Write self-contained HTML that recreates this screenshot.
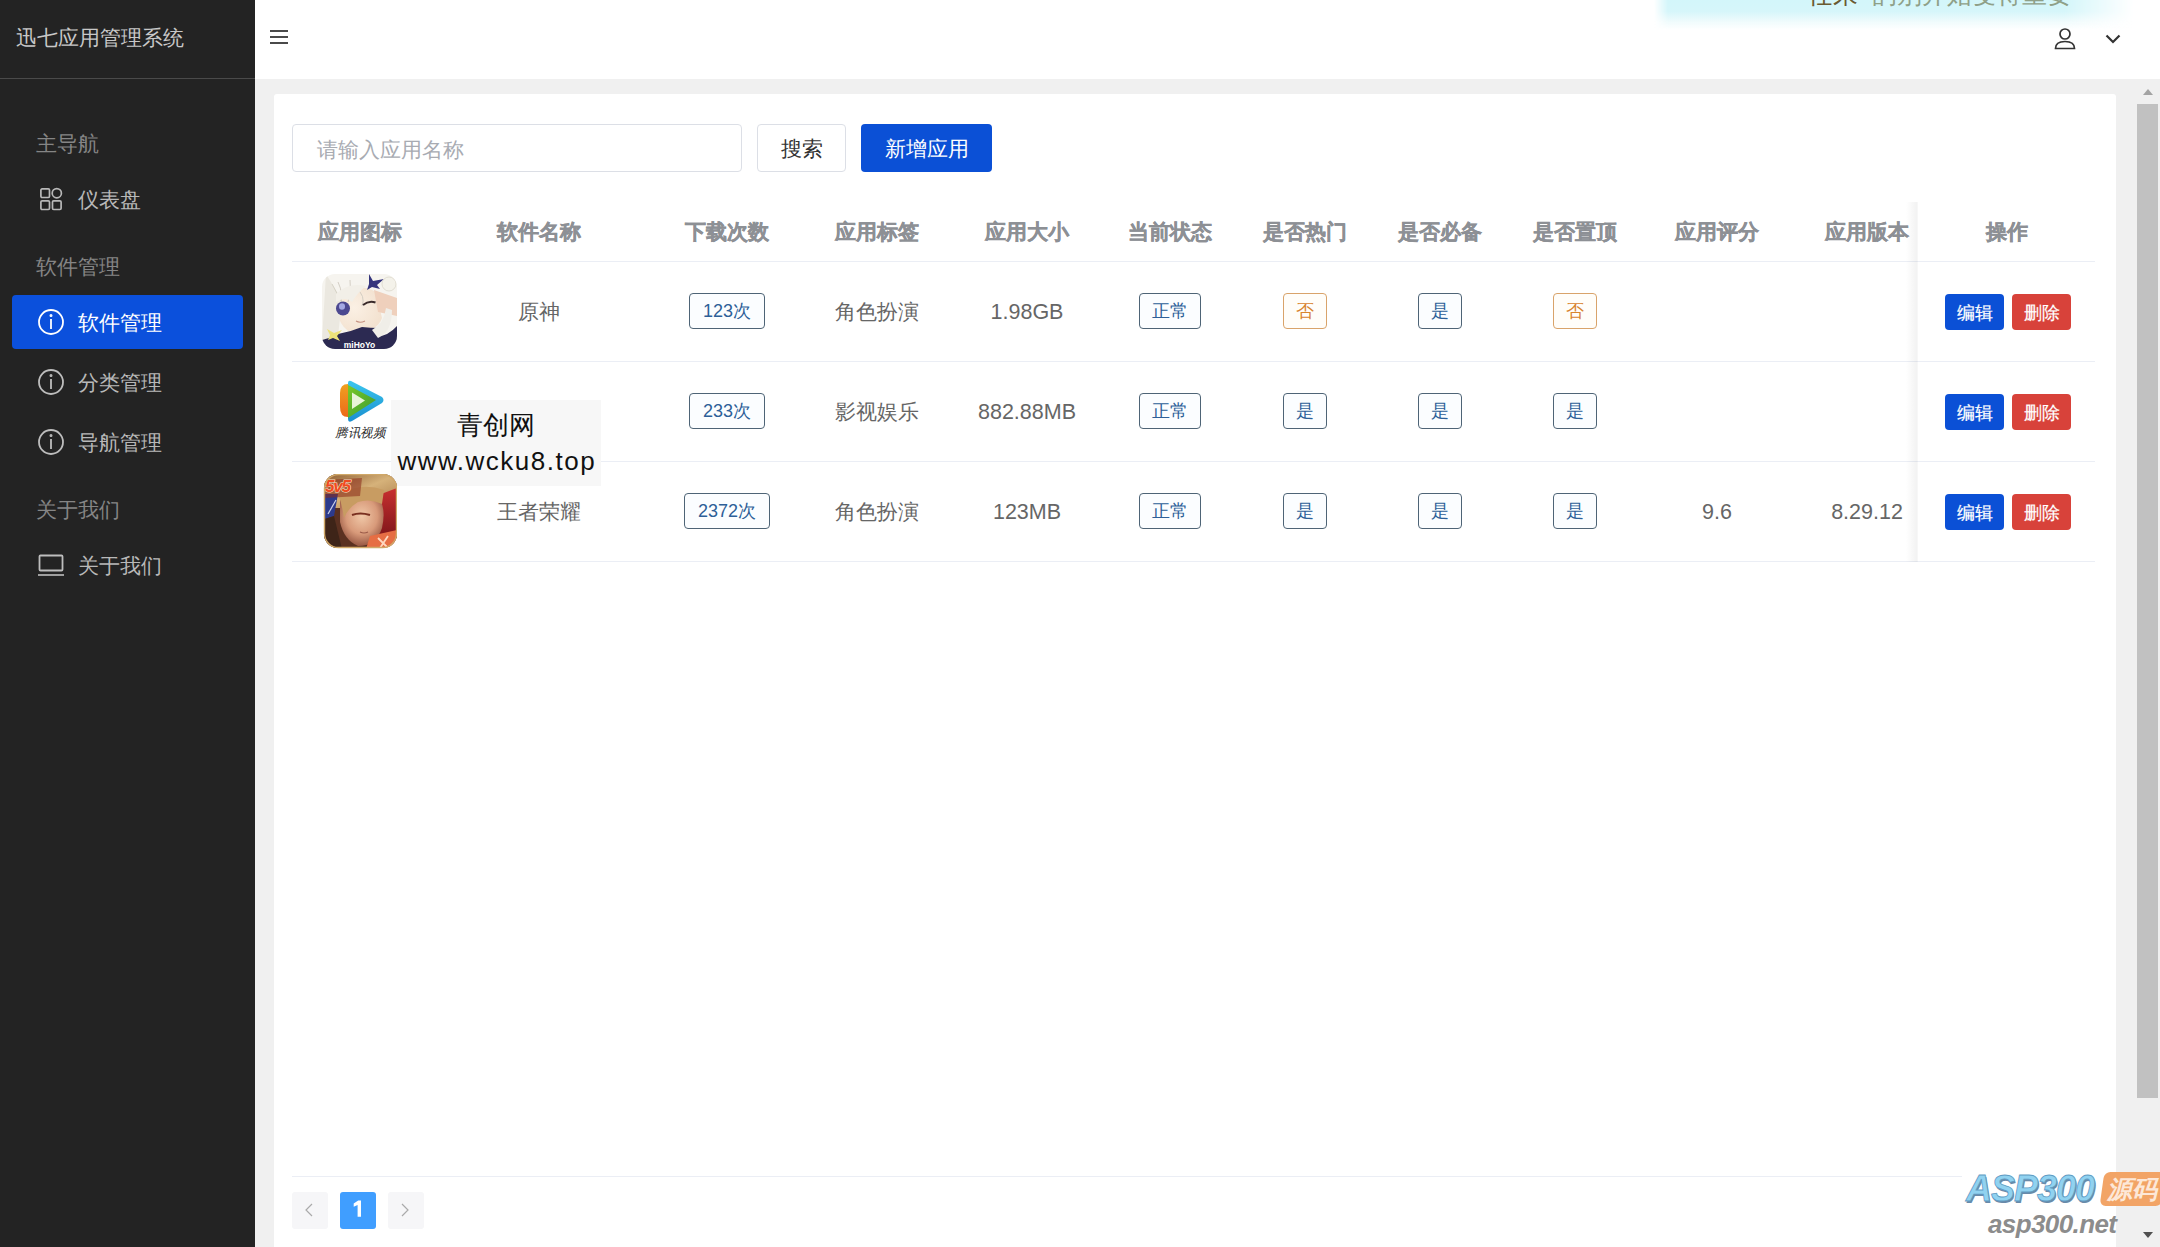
<!DOCTYPE html>
<html><head><meta charset="utf-8">
<style>
*{margin:0;padding:0;box-sizing:border-box}
html,body{width:2160px;height:1247px;overflow:hidden;background:#f0f0f0;font-family:"Liberation Sans",sans-serif}
.abs{position:absolute}
#side{position:absolute;left:0;top:0;width:255px;height:1247px;background:#232323}
#side .title{position:absolute;left:16px;top:25px;font-size:21px;line-height:26px;color:#c8c8c8;white-space:nowrap}
#side .hline{position:absolute;left:0;top:78px;width:255px;height:1px;background:#4a4a4a}
.grp{position:absolute;left:36px;font-size:21px;line-height:26px;color:#858585;white-space:nowrap}
.item{position:absolute;left:12px;width:231px;height:54px;border-radius:4px;color:#b8b8b8;font-size:21px;white-space:nowrap}
.item .txt{position:absolute;left:66px;top:15px;line-height:26px}
.item svg{position:absolute;left:26px;top:14px}
.item.active{background:#0b50dc;color:#fff}
#header{position:absolute;left:255px;top:0;width:1905px;height:79px;background:#fff}
#card{position:absolute;left:274px;top:94px;width:1842px;height:1200px;background:#fff;border-radius:3px}


.hb{position:absolute;left:270px;width:18px;height:2px;background:#4a4a4a}
.ph{position:absolute;left:292px;top:124px;width:450px;height:48px;border:1px solid #dcdfe6;border-radius:4px;background:#fff}
.ph span{position:absolute;left:24px;top:11.5px;font-size:21px;line-height:26px;color:#a8abb2;white-space:nowrap}
.btn{position:absolute;top:124px;height:48px;border-radius:4px;font-size:21px;line-height:48px;text-align:center;white-space:nowrap}
.th{position:absolute;top:219px;width:200px;margin-left:-100px;text-align:center;font-size:21px;line-height:26px;font-weight:bold;color:#8d9095;-webkit-text-stroke:0.35px #8d9095;white-space:nowrap}
.td{position:absolute;width:240px;margin-left:-120px;text-align:center;font-size:21px;line-height:26px;color:#666;white-space:nowrap}
.num{font-size:21.5px}
.tgw{position:absolute;width:200px;margin-left:-100px;text-align:center;height:36px}
.tag{display:inline-block;height:36px;line-height:34px;border:1.2px solid #4e6476;border-radius:4px;background:#fbfdff;color:#2d5f98;font-size:18px;padding:0 13px;white-space:nowrap}
.tag.o{border-color:#d9a36a;color:#d8842f;background:#fffdf9;padding:0 12px}
.tag.s{padding:0 12px}
.rline{position:absolute;left:292px;width:1803px;height:1px;background:#ebeef5}
.ab{position:absolute;width:59px;height:36px;border-radius:4px;color:#fff;font-size:18px;line-height:38px;text-align:center;-webkit-text-stroke:0.2px #fff}
.ab.e{background:#0b50d6}
.ab.d{background:#d8423a}
.pg{position:absolute;top:1192px;width:36px;height:37px;border-radius:3px;background:#f6f6f8;text-align:center;line-height:37px}
</style></head><body>
<div id="side">
  <div class="title">迅七应用管理系统</div>
  <div class="hline"></div>
  <div class="grp" style="top:131px">主导航</div>
  <div class="item" style="top:172px">
    <svg width="26" height="26" viewBox="0 0 26 26" fill="none" stroke="#b8b8b8" stroke-width="1.7" style="left:27px;top:15px"><rect x="1.9" y="1.9" width="8.6" height="8.6" rx="1.2"/><circle cx="17.8" cy="6.2" r="4.6"/><rect x="1.9" y="13.9" width="8.6" height="8.6" rx="1.2"/><rect x="13.5" y="13.9" width="8.6" height="8.6" rx="1.2"/></svg>
    <span class="txt">仪表盘</span></div>
  <div class="grp" style="top:254px">软件管理</div>
  <div class="item active" style="top:295px">
    <svg width="26" height="26" viewBox="0 0 26 26" fill="none" stroke="#fff" stroke-width="1.8"><circle cx="13" cy="13" r="12"/><line x1="13" y1="10" x2="13" y2="20"/><circle cx="13" cy="6.5" r="0.6" fill="#fff"/></svg>
    <span class="txt">软件管理</span></div>
  <div class="item" style="top:355px">
    <svg width="26" height="26" viewBox="0 0 26 26" fill="none" stroke="#bdbdbd" stroke-width="1.8"><circle cx="13" cy="13" r="12"/><line x1="13" y1="10" x2="13" y2="20"/><circle cx="13" cy="6.5" r="0.6" fill="#bdbdbd"/></svg>
    <span class="txt">分类管理</span></div>
  <div class="item" style="top:415px">
    <svg width="26" height="26" viewBox="0 0 26 26" fill="none" stroke="#bdbdbd" stroke-width="1.8"><circle cx="13" cy="13" r="12"/><line x1="13" y1="10" x2="13" y2="20"/><circle cx="13" cy="6.5" r="0.6" fill="#bdbdbd"/></svg>
    <span class="txt">导航管理</span></div>
  <div class="grp" style="top:497px">关于我们</div>
  <div class="item" style="top:538px">
    <svg width="26" height="26" viewBox="0 0 26 26" fill="none" stroke="#bdbdbd" stroke-width="1.8"><rect x="1.5" y="3.5" width="23" height="15" rx="1"/><line x1="0" y1="23" x2="26" y2="23" stroke-width="1.6"/></svg>
    <span class="txt">关于我们</span></div>
</div>

<div id="header"></div>
<div class="hb" style="top:30px"></div><div class="hb" style="top:36px"></div><div class="hb" style="top:42px"></div>
<div id="card"></div>
<div class="ph"><span>请输入应用名称</span></div>
<div class="btn" style="left:757px;width:89px;border:1px solid #dcdfe6;background:#fff;color:#333">搜索</div>
<div class="btn" style="left:861px;width:131px;background:#0b50d6;color:#fff;line-height:50px">新增应用</div>
<div class="th" style="left:360px">应用图标</div>
<div class="th" style="left:539px">软件名称</div>
<div class="th" style="left:727px">下载次数</div>
<div class="th" style="left:877px">应用标签</div>
<div class="th" style="left:1027px">应用大小</div>
<div class="th" style="left:1170px">当前状态</div>
<div class="th" style="left:1305px">是否热门</div>
<div class="th" style="left:1440px">是否必备</div>
<div class="th" style="left:1575px">是否置顶</div>
<div class="th" style="left:1717px">应用评分</div>
<div class="th" style="left:1867px">应用版本</div>
<div class="th" style="left:2007px">操作</div>
<div class="rline" style="top:261px"></div>
<div class="rline" style="top:361px"></div>
<div class="rline" style="top:461px"></div>
<div class="rline" style="top:561px"></div>
<div class="td" style="left:539px;top:299px">原神</div>
<div class="tgw" style="left:727px;top:293px"><span class="tag">123次</span></div>
<div class="td" style="left:877px;top:299px">角色扮演</div>
<div class="td num" style="left:1027px;top:299px">1.98GB</div>
<div class="tgw" style="left:1170px;top:293px"><span class="tag s">正常</span></div>
<div class="tgw" style="left:1305px;top:293px"><span class="tag s o">否</span></div>
<div class="tgw" style="left:1440px;top:293px"><span class="tag s ">是</span></div>
<div class="tgw" style="left:1575px;top:293px"><span class="tag s o">否</span></div>
<div class="ab e" style="left:1945px;top:294px">编辑</div><div class="ab d" style="left:2012px;top:294px">删除</div>
<div class="td" style="left:539px;top:399px"></div>
<div class="tgw" style="left:727px;top:393px"><span class="tag">233次</span></div>
<div class="td" style="left:877px;top:399px">影视娱乐</div>
<div class="td num" style="left:1027px;top:399px">882.88MB</div>
<div class="tgw" style="left:1170px;top:393px"><span class="tag s">正常</span></div>
<div class="tgw" style="left:1305px;top:393px"><span class="tag s ">是</span></div>
<div class="tgw" style="left:1440px;top:393px"><span class="tag s ">是</span></div>
<div class="tgw" style="left:1575px;top:393px"><span class="tag s ">是</span></div>
<div class="ab e" style="left:1945px;top:394px">编辑</div><div class="ab d" style="left:2012px;top:394px">删除</div>
<div class="td" style="left:539px;top:499px">王者荣耀</div>
<div class="tgw" style="left:727px;top:493px"><span class="tag">2372次</span></div>
<div class="td" style="left:877px;top:499px">角色扮演</div>
<div class="td num" style="left:1027px;top:499px">123MB</div>
<div class="tgw" style="left:1170px;top:493px"><span class="tag s">正常</span></div>
<div class="tgw" style="left:1305px;top:493px"><span class="tag s ">是</span></div>
<div class="tgw" style="left:1440px;top:493px"><span class="tag s ">是</span></div>
<div class="tgw" style="left:1575px;top:493px"><span class="tag s ">是</span></div>
<div class="td num" style="left:1717px;top:499px">9.6</div>
<div class="td num" style="left:1867px;top:499px">8.29.12</div>
<div class="ab e" style="left:1945px;top:494px">编辑</div><div class="ab d" style="left:2012px;top:494px">删除</div>
<div class="rline" style="top:1176px"></div>
<div class="pg" style="left:292px"><svg style="position:absolute;left:12px;top:11px" width="10" height="14" viewBox="0 0 10 14"><path d="M8 1 L2 7 L8 13" fill="none" stroke="#aaa" stroke-width="1.2"/></svg></div><div class="pg" style="left:340px;background:#409eff"><svg style="position:absolute;left:12px;top:8px" width="12" height="18" viewBox="0 0 12 18"><path d="M1.7 3.6 L6.2 0.5 L9 0.5 L9 16.7 L5.6 16.7 L5.6 4.9 L1.7 6.8 Z" fill="#fff"/></svg></div><div class="pg" style="left:388px"><svg style="position:absolute;left:12px;top:11px" width="10" height="14" viewBox="0 0 10 14"><path d="M2 1 L8 7 L2 13" fill="none" stroke="#aaa" stroke-width="1.2"/></svg></div>


<!-- fixed col shadow -->
<div style="position:absolute;left:1906px;top:202px;width:11px;height:360px;background:linear-gradient(to right,rgba(0,0,0,0),rgba(0,0,0,0.05))"></div>
<div style="position:absolute;left:1917px;top:202px;width:1px;height:360px;background:rgba(0,0,0,0.03)"></div>
<!-- genshin icon -->
<svg style="position:absolute;left:322px;top:274px" width="75" height="75" viewBox="0 0 75 75">
 <defs><clipPath id="c1"><rect x="0" y="0" width="75" height="75" rx="13"/></clipPath>
 <radialGradient id="gface" cx="0.4" cy="0.45" r="0.6"><stop offset="0" stop-color="#fbf0e4"/><stop offset="1" stop-color="#f3e2d0"/></radialGradient></defs>
 <g clip-path="url(#c1)">
  <rect width="75" height="75" fill="#f6f4ef"/>
  <path d="M14 22 C22 12 40 10 54 18 L60 44 C56 56 42 60 28 58 C18 52 13 40 14 22 Z" fill="url(#gface)"/>
  <path d="M52 16 L75 24 L75 42 L56 38 Z" fill="#efd0bc"/>
  <path d="M4 0 L20 26 L16 62 L0 66 Z" fill="#ebe8e0"/>
  <path d="M10 10 L26 40" stroke="#d6d2c6" stroke-width="1"/><path d="M16 8 Q22 20 18 34 M28 6 Q30 18 26 28 M34 14 Q44 22 40 32" stroke="#cfcac0" stroke-width="0.9" fill="none"/><path d="M14 20 Q26 8 44 12 Q36 18 30 28 Q24 22 14 28 Z" fill="#f2efe8"/>
  <ellipse cx="21" cy="34.5" rx="7" ry="7" fill="#4c4890"/>
  <ellipse cx="20" cy="32.5" rx="3" ry="3.2" fill="#a4a8e4"/>
  <path d="M41 31 Q47 26 53.5 28.5" stroke="#3a2a2a" stroke-width="2" fill="none"/>
  <path d="M34 47 Q38 49.5 43 47" stroke="#c69080" stroke-width="1.1" fill="none"/>
  <path d="M47 0 L51 7 L62 5 L55 11 L58 15 L50 13 L45 16 L47 10 Z" fill="#34347c"/>
  <circle cx="67" cy="10" r="7" fill="#f4f2ea" stroke="#dcd8cc" stroke-width="0.8"/>
  <path d="M0 66 L0 75 L75 75 L75 52 Q66 62 56 62 L58 54 Q48 54 40 53 Q28 58 16 60 Q8 64 0 66 Z" fill="#2c2a52"/>
  <path d="M50 56 Q62 50 64 34 L70 36 Q70 58 56 64 Z" fill="#f0eee8"/>
  <path d="M5 55 L12 59 L20 56 L15 62 L18 67 L11 64 L6 66 L8 61 Z" fill="#ece27a"/>
  <text x="37.5" y="73.5" font-family="Liberation Sans" font-weight="bold" font-size="8.5" fill="#fff" text-anchor="middle">miHoYo</text>
 </g>
</svg>
<!-- tencent video -->
<svg style="position:absolute;left:322px;top:367px" width="75" height="75" viewBox="0 0 75 75">
 <defs>
  <linearGradient id="tvb" x1="0" y1="0" x2="0" y2="1"><stop offset="0" stop-color="#3cc6ee"/><stop offset="1" stop-color="#1a8fd0"/></linearGradient>
  <linearGradient id="tvg" x1="0" y1="0" x2="1" y2="1"><stop offset="0" stop-color="#7ac928"/><stop offset="1" stop-color="#3a9a30"/></linearGradient>
  <linearGradient id="tvo" x1="0" y1="0" x2="0" y2="1"><stop offset="0" stop-color="#f0a020"/><stop offset="1" stop-color="#ec6a1a"/></linearGradient>
 </defs>
 <path d="M26 16 Q26 13 29 14 L60 30 Q63 33 60 36 L30 54 Q26 56 26 52 Z" fill="url(#tvb)"/>
 <path d="M26 17 Q18 17 18 26 L18 40 Q18 50 26 50 Z" fill="url(#tvo)"/>
 <path d="M26 18 L54 33 L26 51 Z" fill="url(#tvg)"/>
 <path d="M30 25.5 L43 33.5 L30 42 Z" fill="#e8f4d8"/>
 <text x="38.5" y="69.5" font-family="Liberation Sans" font-size="12.5" font-style="italic" fill="#2a2a2a" text-anchor="middle" letter-spacing="-0.4">腾讯视频</text>
</svg>
<!-- watermark box -->
<div style="position:absolute;left:391px;top:400px;width:210px;height:86px;background:#f7f7f7"></div>
<div style="position:absolute;left:391px;top:409px;width:210px;text-align:center;font-size:26px;line-height:32px;color:#111;font-weight:500">青创网</div>
<div style="position:absolute;left:391px;top:445px;width:210px;text-align:center;font-size:26px;line-height:32px;color:#111;letter-spacing:1.5px;padding-left:1.5px">www.wcku8.top</div>
<!-- honor of kings -->
<svg style="position:absolute;left:322px;top:474px" width="75" height="75" viewBox="0 0 75 75">
 <defs>
  <clipPath id="c3"><rect x="2" y="0" width="73" height="74" rx="14"/></clipPath>
  <linearGradient id="hkh" x1="0" y1="0" x2="1" y2="1"><stop offset="0" stop-color="#8a5a30"/><stop offset="0.5" stop-color="#d6b27a"/><stop offset="1" stop-color="#a87a48"/></linearGradient>
  <radialGradient id="hkf" cx="0.5" cy="0.4" r="0.65"><stop offset="0" stop-color="#f0c8a8"/><stop offset="0.55" stop-color="#d89a7a"/><stop offset="1" stop-color="#8a4a38"/></radialGradient>
  <linearGradient id="hkr" x1="0" y1="0" x2="0" y2="1"><stop offset="0" stop-color="#c83030"/><stop offset="1" stop-color="#7a1418"/></linearGradient>
 </defs>
 <g clip-path="url(#c3)">
  <rect width="75" height="75" fill="#5a3020"/>
  <rect x="0" y="0" width="75" height="34" fill="url(#hkh)"/>
  <path d="M54 22 L75 14 L75 64 L58 66 Z" fill="url(#hkr)"/>
  <path d="M0 20 L16 20 L12 42 L0 46 Z" fill="#2c3a8c"/>
  <path d="M6 40 L14 26" stroke="#c8d0e8" stroke-width="1.2"/>
  <path d="M0 46 L12 42 L20 75 L0 75 Z" fill="#3e2418"/>
  <path d="M18 26 Q36 18 58 26 Q64 36 60 54 Q54 72 36 72 Q22 66 18 48 Z" fill="url(#hkf)"/>
  <path d="M16 20 Q20 30 22 44 Q26 34 36 28 Q48 24 60 30 L62 16 Q40 8 16 20 Z" fill="#c89c62"/>
  <path d="M30 41 Q38 38 48 41" stroke="#7a3020" stroke-width="2.2" fill="none"/>
  <path d="M38 58 Q42 60 46 58" stroke="#9a5a48" stroke-width="1.2" fill="none"/>
  <path d="M48 62 L75 56 L75 75 L44 75 Z" fill="#e66e44"/>
  <path d="M56 64 L66 74 M66 62 L58 74" stroke="#ffd8c0" stroke-width="1.8"/>
  <path d="M0 6 L40 4 L38 22 L0 24 Z" fill="#8a2a1a" opacity="0.55"/><text x="3" y="18" font-family="Liberation Sans" font-weight="bold" font-style="italic" font-size="17" fill="#f04a20" stroke="#ffe6c8" stroke-width="1.1" paint-order="stroke" letter-spacing="-1.2">5v5</text>
 </g>
 <rect x="2.5" y="0.5" width="72" height="73" rx="14" fill="none" stroke="#d0a868" stroke-width="1.4"/>
</svg>
<!-- header right -->
<div style="position:absolute;left:1654px;top:0;width:480px;height:30px;background:linear-gradient(to bottom,#d3f6fa 0,#d6f6fa 38%,#eefbfc 70%,rgba(255,255,255,0) 100%);-webkit-mask-image:linear-gradient(to right,transparent 0,#000 14px,#000 calc(100% - 70px),transparent 100%)"></div>

<div style="position:absolute;left:1808px;top:-21px;font-size:25px;line-height:30px;color:#6a5a30;white-space:nowrap">任来</div>
<div style="position:absolute;left:1872px;top:-21px;font-size:25px;line-height:30px;color:#8fa088;white-space:nowrap">的别开始变得重要</div>
<svg style="position:absolute;left:2053px;top:27px" width="24" height="23" viewBox="0 0 24 23" fill="none" stroke="#333" stroke-width="1.7">
 <circle cx="12" cy="7" r="5"/><path d="M2.5 21.5 Q2.5 14.5 12 14.5 Q21.5 14.5 21.5 21.5 Z"/>
</svg>
<svg style="position:absolute;left:2104px;top:33px" width="18" height="12" viewBox="0 0 18 12" fill="none" stroke="#333" stroke-width="2.2">
 <path d="M2.5 2.5 L9 9 L15.5 2.5"/>
</svg>
<!-- scrollbar -->
<div style="position:absolute;left:2137px;top:104px;width:21px;height:994px;background:#c1c1c1"></div>
<svg style="position:absolute;left:2141px;top:87px" width="14" height="9" viewBox="0 0 14 9"><path d="M2 8 L7 2 L12 8 Z" fill="#a3a3a3"/></svg>
<svg style="position:absolute;left:2141px;top:1230px" width="14" height="9" viewBox="0 0 14 9"><path d="M2 2 L7 8 L12 2 Z" fill="#505050"/></svg>
<!-- asp300 watermark -->
<div style="position:absolute;left:1962px;top:1168px;width:154px;height:79px;background:#fff"></div>
<div style="position:absolute;left:1966px;top:1167px;font-size:36px;line-height:44px;font-weight:bold;font-style:italic;color:#90d2f0;letter-spacing:-1px;white-space:nowrap;text-shadow:1px 1.5px 0 #6a8aa8;-webkit-text-stroke:0.8px #5f9cc4">ASP300</div>
<div style="position:absolute;left:2102px;top:1172px;width:62px;height:34px;background:#f2a466;border-radius:6px;transform:skewX(-8deg)"></div>
<div style="position:absolute;left:2103px;top:1173px;width:58px;font-size:25px;line-height:32px;font-weight:bold;font-style:italic;color:#fde8d8;text-align:center;white-space:nowrap">源码</div>
<div style="position:absolute;left:1988px;top:1207px;font-size:26px;line-height:34px;font-weight:bold;font-style:italic;color:#8c8c8c;letter-spacing:-0.6px;white-space:nowrap">asp300.net</div>
</body></html>
